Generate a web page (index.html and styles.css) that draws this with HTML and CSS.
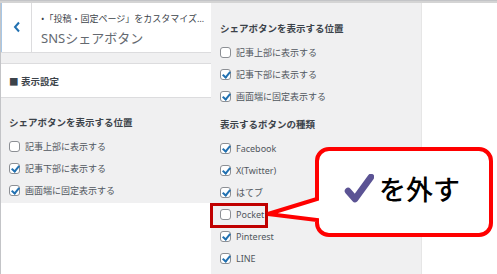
FILE: index.html
```html
<!DOCTYPE html>
<html lang="ja">
<head>
    <meta charset="UTF-8">
    <meta name="viewport" content="width=device-width, initial-scale=1.0">
    <title>SNSシェアボタン</title>
    <link rel="stylesheet" href="styles.css">
</head>
<body>
    <div class="topline"></div>

    <div class="screens">
        <!-- left: customizer panel -->
        <div class="panel-left">
            <div class="header">
                <div class="back">
                    <svg width="8" height="12" viewBox="0 0 8 12"><polyline points="6,1.5 2,6 6,10.5" fill="none" stroke="#2271b1" stroke-width="2"/></svg>
                </div>
                <div class="title">
                    <span class="crumb">•「投稿・固定ページ」をカスタマイズ…</span>
                    <span class="name">SNSシェアボタン</span>
                </div>
            </div>
            <div class="band"></div>
            <div class="section-title">■ 表示設定</div>
            <div class="group">
                <h3>シェアボタンを表示する位置</h3>
                <div class="item"><span class="box"></span>記事上部に表示する</div>
                <div class="item"><span class="box checked"></span>記事下部に表示する</div>
                <div class="item"><span class="box checked"></span>画面端に固定表示する</div>
            </div>
        </div>

        <!-- right: scrolled view -->
        <div class="panel-right">
            <h3>シェアボタンを表示する位置</h3>
            <div class="item"><span class="box"></span>記事上部に表示する</div>
            <div class="item"><span class="box checked"></span>記事下部に表示する</div>
            <div class="item"><span class="box checked"></span>画面端に固定表示する</div>

            <h3 class="second">表示するボタンの種類</h3>
            <div class="item"><span class="box checked"></span>Facebook</div>
            <div class="item"><span class="box checked"></span>X(Twitter)</div>
            <div class="item"><span class="box checked"></span>はてブ</div>
            <div class="item"><span class="box"></span>Pocket</div>
            <div class="item"><span class="box checked"></span>Pinterest</div>
            <div class="item"><span class="box checked"></span>LINE</div>
        </div>
    </div>

    <!-- annotation overlay -->
    <div class="highlight"></div>
    <div class="callout">
        <svg class="bubble" width="237" height="104" viewBox="0 0 237 104">
            <path d="M69 9 H219 A12 12 0 0 1 231 21 V83 A12 12 0 0 1 219 95 H69 A12 12 0 0 1 57 83 V80 L8 74 L57 59 V21 A12 12 0 0 1 69 9 Z" fill="#fff" stroke="#ff0000" stroke-width="4" stroke-linejoin="miter"/>
        </svg>
        <div class="label">
            <svg width="30" height="30" viewBox="0 0 30 30"><path d="M4 17 L11 25 L27 3" fill="none" stroke="#5b5394" stroke-width="6.5" stroke-linecap="round" stroke-linejoin="round"/></svg>
            <span>を外す</span>
        </div>
    </div>
</body>
</html>
```

FILE: styles.css
```css
* {
    padding: 0;
    margin: 0;
    box-sizing: border-box;
}

body {
    font-family: 'Noto Sans', 'Noto Sans CJK JP', sans-serif;
    background: #fff;
    width: 497px;
    height: 274px;
    overflow: hidden;
    position: relative;
    color: #50575e;
}

.topline {
    height: 3px;
    background: #d4d4d4;
    border-top: 1px solid #c3c4c7;
}

.screens {
    display: flex;
    height: 271px;
}

/* Left panel */
.panel-left {
    width: 211px;
    border-left: 1px solid #c3c4c7;
    display: flex;
    flex-direction: column;
}

.header {
    height: 50px;
    display: flex;
    background: #fff;
    border-bottom: 1px solid #dcdcde;
}

.back {
    width: 31px;
    border-left: 1px solid #a7c7e6;
    border-right: 1px solid #dcdcde;
    display: flex;
    align-items: center;
    justify-content: center;
    padding-bottom: 2px;
}

.title {
    padding: 9px 0 0 9px;
    display: flex;
    flex-direction: column;
}

.crumb {
    font-size: 9px;
    line-height: 14px;
    color: #3c434a;
    white-space: nowrap;
}

.name {
    font-size: 13px;
    line-height: 20px;
    margin-top: 2px;
    color: #646970;
}

.band {
    height: 10px;
    background: #f0f0f1;
}

.section-title {
    height: 35px;
    background: #fff;
    border-top: 1px solid #dcdcde;
    border-bottom: 1px solid #dcdcde;
    font-size: 9.5px;
    font-weight: bold;
    color: #3c434a;
    padding-left: 8px;
    display: flex;
    align-items: center;
}

.group {
    background: #f0f0f1;
    padding: 17px 0 2px 8px;
}

h3 {
    font-size: 9.5px;
    font-weight: bold;
    line-height: 16px;
    color: #3c434a;
    margin-bottom: 4px;
}

.item {
    height: 22px;
    display: flex;
    align-items: center;
    gap: 5px;
    font-size: 9px;
}

.box {
    width: 11px;
    height: 11px;
    border: 1px solid #8c8f94;
    border-radius: 3px;
    background: #fff;
    position: relative;
}

.box.checked::after {
    content: '';
    position: absolute;
    left: 3px;
    top: 0px;
    width: 3px;
    height: 6px;
    border-right: 2px solid #2271b1;
    border-bottom: 2px solid #2271b1;
    transform: rotate(40deg);
}

/* Right panel */
.panel-right {
    width: 211px;
    background: #f0f0f1;
    padding: 18px 0 0 9px;
    border-right: 1px solid #e6e6e6;
}

.panel-right h3.second {
    margin-top: 10px;
}

/* Annotation */
.highlight {
    position: absolute;
    left: 210px;
    top: 203px;
    width: 58px;
    height: 25px;
    border: 3px solid #c00000;
}

.callout {
    position: absolute;
    left: 260px;
    top: 140px;
    width: 237px;
    height: 104px;
}

.bubble {
    display: block;
}

.label {
    position: absolute;
    left: 84px;
    top: 33px;
    display: flex;
    align-items: center;
    gap: 5px;
}

.label span {
    font-family: 'Noto Sans CJK JP', sans-serif;
    font-size: 27px;
    font-weight: 500;
    color: #000;
    line-height: 32px;
}
```
